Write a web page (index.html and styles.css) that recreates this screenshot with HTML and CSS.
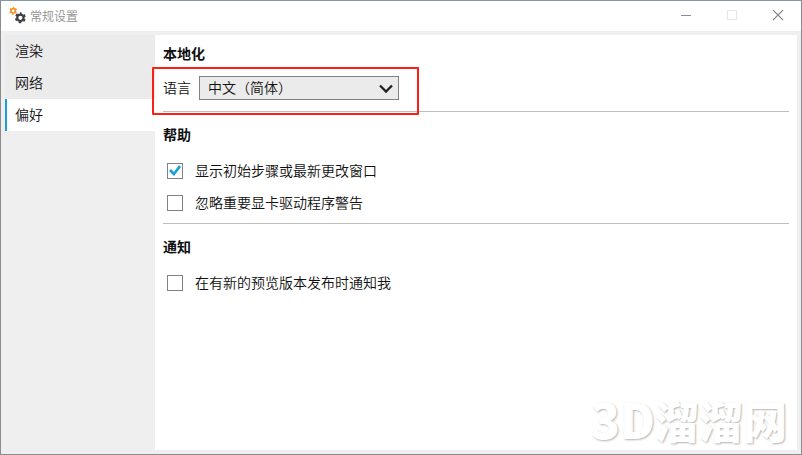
FILE: index.html
```html
<!DOCTYPE html>
<html lang="zh-CN">
<head>
  <meta charset="UTF-8" />
  <meta name="viewport" content="width=device-width, initial-scale=1.0"/>
  <title>常规设置</title>
  <link rel="stylesheet" href="styles.css">
</head>
<body>
  <div class="window">
    <header class="titlebar">
      <svg class="app-icon" width="18" height="18" viewBox="0 0 18 18" fill="none">
        <circle cx="4.2" cy="3.8" r="2.2" stroke="#f59322" stroke-width="1.7"/>
        <circle cx="4.2" cy="3.8" r="3.2" stroke="#f59322" stroke-width="1.3" stroke-dasharray="1.7 1.65" stroke-dashoffset=".85" transform="rotate(-90 4.2 3.8)"/>
        <circle cx="11.4" cy="10.8" r="3.2" stroke="#3c3c3c" stroke-width="2.2"/>
        <circle cx="11.4" cy="10.8" r="4.7" stroke="#3c3c3c" stroke-width="1.6" stroke-dasharray="2.5 2.422" stroke-dashoffset="1.25" transform="rotate(-90 11.4 10.8)"/>
      </svg>
      <h1>常规设置</h1>
      <div class="window-buttons">
        <button type="button" aria-label="最小化">
          <svg width="12" height="12" viewBox="0 0 12 12"><path d="M1 5.5h10" stroke="#8c8c8c"/></svg>
        </button>
        <button type="button" aria-label="最大化" disabled>
          <svg width="12" height="12" viewBox="0 0 12 12"><path d="M1.5 .5h9v9h-9z" fill="none" stroke="#e6e6e6"/></svg>
        </button>
        <button type="button" aria-label="关闭">
          <svg width="12" height="12" viewBox="0 0 12 12"><path d="M1 0l10 10M11 0L1 10" stroke="#858585" stroke-width="1.1"/></svg>
        </button>
      </div>
    </header>

    <div class="content">
      <nav class="sidebar">
        <a href="#render">渲染</a>
        <a href="#network">网络</a>
        <a href="#preferences" class="active">偏好</a>
      </nav>

      <main class="panel" id="preferences">
        <section>
          <h2>本地化</h2>
          <div class="language-row">
            <label for="language">语言</label>
            <div class="select-box">
              <select id="language">
                <option selected>中文（简体）</option>
              </select>
              <svg class="arrow" width="14" height="10" viewBox="0 0 14 10"><path d="M1 1.5l6 6 6-6" fill="none" stroke="#222" stroke-width="2.3"/></svg>
            </div>
            <div class="highlight"></div>
          </div>
        </section>

        <section>
          <h2>帮助</h2>
          <label class="check-row"><input type="checkbox" checked><span>显示初始步骤或最新更改窗口</span></label>
          <label class="check-row"><input type="checkbox"><span>忽略重要显卡驱动程序警告</span></label>
        </section>

        <section>
          <h2>通知</h2>
          <label class="check-row"><input type="checkbox"><span>在有新的预览版本发布时通知我</span></label>
        </section>

        <div class="watermark"><span class="latin">3D</span>溜溜网</div>
      </main>
    </div>
  </div>
</body>
</html>
```

FILE: styles.css
```css
* {
  box-sizing: border-box;
}
body {
  margin: 0;
  font-family: "Noto Sans CJK SC", sans-serif;
  font-size: 14px;
  font-weight: 350;
  color: #101010;
}
.window {
  display: flex;
  flex-direction: column;
  min-height: 100vh;
  border: 1px solid #8c8c90;
  border-top-color: #8499a8;
  background-color: #efefef;
}
.titlebar {
  display: flex;
  align-items: center;
  height: 30px;
  padding-left: 8px;
  background-color: white;
}
.titlebar h1 {
  flex: 1;
  margin: 0 0 0 3px;
  padding-bottom: 2px;
  font-size: 12px;
  font-weight: 350;
  color: #909090;
}
.window-buttons {
  display: flex;
}
.window-buttons button {
  display: flex;
  align-items: center;
  justify-content: center;
  width: 46px;
  height: 30px;
  padding: 0;
  border: none;
  background: none;
}
.content {
  flex: 1;
  display: flex;
  padding: 4px;
}
.sidebar {
  width: 150px;
}
.sidebar a {
  display: block;
  padding: 0 0 2px 8px;
  border-left: 2px solid #ebebeb;
  background-color: #ebebeb;
  line-height: 30px;
  color: inherit;
  text-decoration: none;
}
.sidebar a.active {
  border-left-color: #1a9fdb;
  background-color: white;
}
.panel {
  position: relative;
  flex: 1;
  padding: 0 8px;
  background-color: white;
}
section {
  padding: 11px 0 4px;
  border-bottom: 1px solid #bebebe;
}
section:first-child {
  padding: 7px 0 9px;
}
section:last-of-type {
  border-bottom: none;
}
h2 {
  margin: 0 0 10px;
  font-size: 14px;
  line-height: 22px;
}
.language-row {
  position: relative;
  display: flex;
  align-items: center;
  gap: 8px;
  height: 28px;
}
.language-row label,
.check-row span {
  padding-bottom: 2px;
}
.select-box {
  position: relative;
  width: 200px;
}
select {
  appearance: none;
  display: block;
  width: 100%;
  height: 24px;
  padding: 0 24px 2px 8px;
  border: 1px solid #828282;
  border-radius: 0;
  background-color: #ebebeb;
  font: inherit;
  line-height: 20px;
  color: inherit;
}
.arrow {
  position: absolute;
  top: 8px;
  right: 6px;
  pointer-events: none;
}
.highlight {
  position: absolute;
  top: -7px;
  left: -11px;
  width: 267px;
  height: 48px;
  border: 2px solid #fc2014;
  border-radius: 1px;
  pointer-events: none;
}
.check-row {
  display: flex;
  align-items: center;
  gap: 12px;
  height: 32px;
  padding-left: 4px;
}
input[type="checkbox"] {
  appearance: none;
  width: 16px;
  height: 16px;
  margin: 0;
  border: 1px solid #828282;
  background-color: white;
}
input[type="checkbox"]:checked::after {
  content: "";
  display: block;
  width: 14px;
  height: 14px;
  background-color: #1a9fdb;
  clip-path: polygon(1px 7px, 3px 5px, 6px 8px, 11px 1px, 13px 3px, 6px 12px);
}
.watermark {
  position: absolute;
  right: 10px;
  bottom: 6px;
  font-size: 44px;
  font-weight: 900;
  line-height: 48px;
  color: white;
  text-shadow: 1px 1px 2px #b4b4b4;
  pointer-events: none;
}
.latin {
  font-size: 48px;
}
```
